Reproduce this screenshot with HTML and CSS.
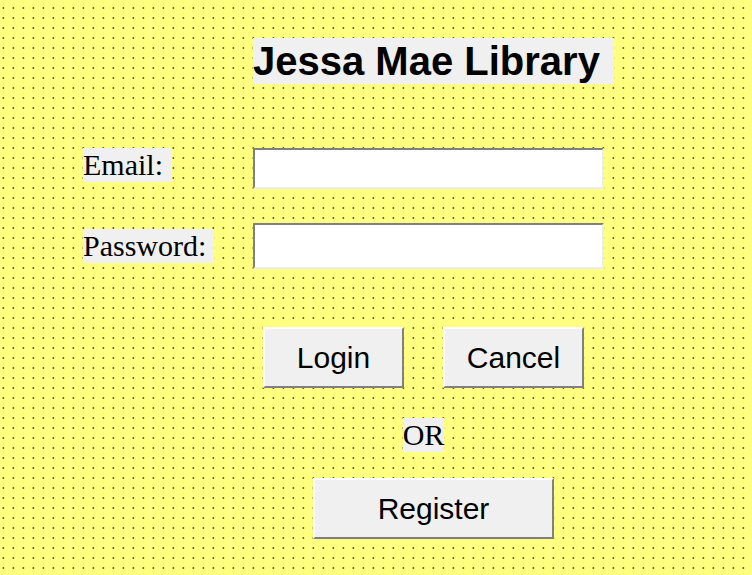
FILE: index.html
```html
<!DOCTYPE html>
<html lang="en">
<head>
<meta charset="utf-8">
<meta name="viewport" content="width=device-width, initial-scale=1">
<title>Jessa Mae Library</title>
<link rel="stylesheet" href="styles.css">
</head>
<body>
<form class="login">
  <h1 class="title">Jessa Mae Library</h1>
  <div class="fields">
    <label class="label" for="email">Email:</label>
    <input class="input" id="email" type="email">
    <label class="label label-middle" for="password">Password:</label>
    <input class="input input-tall" id="password" type="password">
  </div>
  <div class="actions">
    <div class="pair">
      <button class="button" type="submit">Login</button>
      <button class="button" type="reset">Cancel</button>
    </div>
    <p class="or">OR</p>
    <div class="register">
      <button class="button button-wide" type="button">Register</button>
    </div>
  </div>
</form>
</body>
</html>
```
FILE: styles.css
```css
* {
  box-sizing: border-box;
}

body {
  margin: 0;
  min-height: 100vh;
  color: #000;
  background: #ffff80 url("data:image/svg+xml,%3Csvg xmlns='http://www.w3.org/2000/svg' width='10' height='10' shape-rendering='crispEdges'%3E%3Cpath fill='%23c0c060' d='M2 7h1v2h-1z'/%3E%3Cpath fill='%23606030' d='M3 7h1v2h-1z'/%3E%3Cpath fill='%23e8e874' d='M4 7h1v2h-1z'/%3E%3C/svg%3E");
}

.login {
  padding: 38px 138px 36px 83px;
}

.title {
  width: fit-content;
  margin: 0 0 64px 170px;
  padding-right: 14px;
  background: #f0f0f0;
  font: bold 40px/46px "Liberation Sans", Arial, sans-serif;
  white-space: nowrap;
}

.fields {
  display: grid;
  grid-template-columns: 170px 1fr;
  row-gap: 34px;
  align-items: start;
  padding-right: 10px;
}

.label,
.or {
  width: fit-content;
  margin: 0;
  background: #f0f0f0;
  font: 30px/34px "Liberation Serif", "Times New Roman", serif;
}

.label {
  padding-right: 8px;
}

.label-middle {
  align-self: center;
}

.input {
  width: 100%;
  min-width: 0;
  height: 41px;
  padding: 2px 6px;
  border: 2px solid;
  border-color: #808080 #ececec #ececec #808080;
  border-radius: 0;
  outline: 0;
  background: #fff;
  font: 24px "Liberation Sans", Arial, sans-serif;
}

.input-tall {
  height: 46px;
}

.actions {
  display: flex;
  flex-direction: column;
  align-items: center;
  gap: 26px;
  margin: 58px 0 0 170px;
  padding-right: 20px;
}

.pair {
  display: flex;
  gap: 39px;
  margin-bottom: 4px;
}

.register {
  padding-left: 20px;
}

.button {
  width: 141px;
  height: 61px;
  padding: 0;
  border: 2px solid;
  border-color: #fff #808080 #808080 #fff;
  border-radius: 0;
  background: #f0f0f0;
  color: #000;
  font: 30px "Liberation Sans", Arial, sans-serif;
}

.button-wide {
  width: 241px;
}
```
